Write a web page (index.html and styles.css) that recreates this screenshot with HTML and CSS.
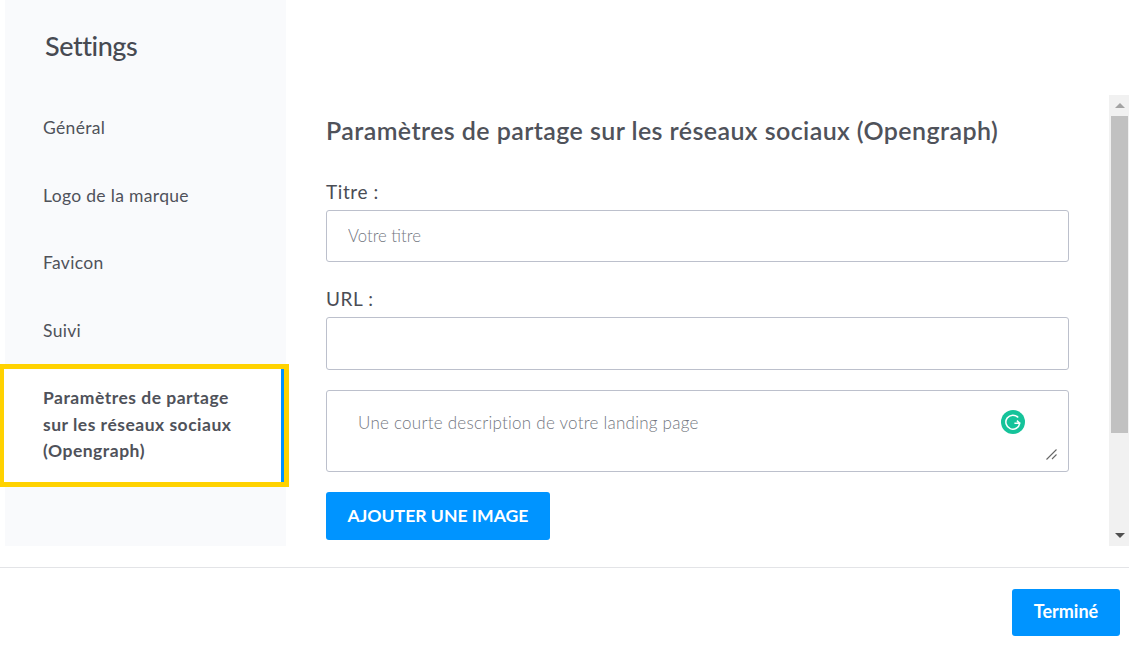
FILE: index.html
```html
<!DOCTYPE html>
<html lang="fr">
<head>
<meta charset="utf-8">
<title>Settings</title>
<link rel="stylesheet" href="styles.css">
</head>
<body>
<div class="page">
  <div class="top">
    <aside class="sidebar">
      <h1 class="title">Settings</h1>
      <nav class="nav">
        <a class="nav-item">Général</a>
        <a class="nav-item">Logo de la marque</a>
        <a class="nav-item">Favicon</a>
        <a class="nav-item">Suivi</a>
        <a class="nav-active"><span class="nav-active-inner">Paramètres de partage<br>sur les réseaux sociaux<br>(Opengraph)</span></a>
      </nav>
    </aside>
    <main class="main">
      <div class="scrollpane">
        <form class="content">
          <h2 class="heading">Paramètres de partage sur les réseaux sociaux (Opengraph)</h2>
          <label class="label label-first">Titre :</label>
          <input class="input" type="text" placeholder="Votre titre">
          <label class="label label-second">URL :</label>
          <input class="input input-url" type="text">
          <div class="area-wrap">
            <textarea class="area" placeholder="Une courte description de votre landing page"></textarea>
            <svg class="grammarly" width="24" height="24" viewBox="0 0 24 24" aria-hidden="true">
              <circle cx="12" cy="12" r="12" fill="#15c39a"/>
              <path d="M17.2 7.6A7 7 0 1 0 18.8 13.2H13.4M18.8 13.2l-2.9 -2.6" fill="none" stroke="#fff" stroke-width="1.5"/>
            </svg>
            <svg class="grip" width="11" height="11" viewBox="0 0 11 11" aria-hidden="true">
              <path d="M0.5 10.5L10.5 0.5M6 10L10.5 5.5" fill="none" stroke="#666" stroke-width="1.1"/>
            </svg>
          </div>
          <button class="btn btn-image" type="button">AJOUTER UNE IMAGE</button>
        </form>
        <div class="scrollbar">
          <div class="arrow-box"><span class="arrow-up"></span></div>
          <div class="thumb"></div>
          <div class="track"></div>
          <div class="arrow-box"><span class="arrow-down"></span></div>
        </div>
      </div>
    </main>
  </div>
  <footer class="footer">
    <button class="btn btn-done" type="button">Terminé</button>
  </footer>
</div>
</body>
</html>
```
FILE: styles.css
```css
* { box-sizing: border-box; }
html, body { margin: 0; padding: 0; background: #fff; }
body { font-family: "Lato", "Noto Sans", sans-serif; color: #4a4d55; overflow: hidden; }
.page { width: 1129px; height: 651px; display: flex; flex-direction: column; }
.top { height: 546px; display: flex; }
.sidebar { width: 281px; margin-left: 5px; background: #f9fafc; flex: none; }
.title { margin: 0; height: 94px; padding: 28px 0 0 40px; font-size: 27px; line-height: 36px; font-weight: 500; letter-spacing: -0.45px; color: #474a52; }
.nav { display: flex; flex-direction: column; }
.nav-item { height: 67.5px; padding-left: 38px; display: flex; align-items: center; font-size: 17.5px; letter-spacing: 0.33px; color: #4f525a; }
.nav-active { display: block; width: 289px; margin: 0 0 0 -5px; border: 5px solid #ffd200; border-left-width: 4px; background: #fff; }
.nav-active-inner { display: block; height: 113px; padding: 16px 0 0 39px; border-right: 3px solid #0090ff; font-size: 17.5px; line-height: 26.7px; font-weight: 700; letter-spacing: 0.5px; color: #4f525a; }
.main { flex: 1; padding-top: 95px; }
.scrollpane { height: 451px; display: flex; padding-left: 40px; }
.content { width: 743px; margin-right: 40px; flex: none; display: flex; flex-direction: column; align-items: flex-start; }
.heading { margin: 0; height: 73px; padding-top: 19px; font-size: 25px; line-height: 32px; font-weight: 600; letter-spacing: 0.41px; color: #4f525a; white-space: nowrap; }
.label { display: block; font-size: 19px; line-height: 24px; letter-spacing: 0.6px; color: #4a4d55; }
.label-first { margin-top: 12px; height: 30px; }
.label-second { margin-top: 25px; height: 30px; }
.input { display: block; width: 743px; height: 52px; padding: 0 21px 1px; border: 1px solid #bcc0cc; border-radius: 3px; font: 300 16.7px "Lato", sans-serif; color: #4a4d55; outline: none; background: #fff; }
.input-url { height: 53px; }
.input::placeholder, .area::placeholder { color: #73777f; opacity: 1; }
.area-wrap { position: relative; width: 743px; height: 82px; margin-top: 20px; }
.area { display: block; width: 743px; height: 82px; padding: 22px 31px; border: 1px solid #bcc0cc; border-radius: 3px; font: 300 17px/20px "Lato", sans-serif; letter-spacing: 0.25px; color: #4a4d55; outline: none; resize: none; }
.grammarly { position: absolute; left: 675px; top: 20px; }
.grip { position: absolute; left: 720px; top: 59px; }
.btn { display: block; border: 0; border-radius: 3px; background: #0094ff; color: #fff; font-family: "Lato", sans-serif; font-weight: 700; }
.btn-image { width: 224px; height: 48px; margin-top: 20px; padding-bottom: 2px; font-size: 17.6px; }
.scrollbar { width: 20px; height: 451px; background: #f1f1f1; display: flex; flex-direction: column; flex: none; padding: 0 1px 0 2px; }
.arrow-box { height: 21px; display: flex; align-items: center; justify-content: center; flex: none; }
.arrow-up, .arrow-down { width: 0; height: 0; border-left: 5px solid transparent; border-right: 5px solid transparent; }
.arrow-up { border-bottom: 5px solid #a3a3a3; }
.arrow-down { border-top: 5px solid #505050; }
.thumb { height: 317px; background: #c1c1c1; flex: none; }
.track { flex: 1; }
.footer { margin-top: 21px; border-top: 1px solid #e3e4e7; padding: 21px 9px 0 0; display: flex; justify-content: flex-end; }
.btn-done { width: 108px; height: 47px; padding-bottom: 4px; font-size: 18px; }
```
